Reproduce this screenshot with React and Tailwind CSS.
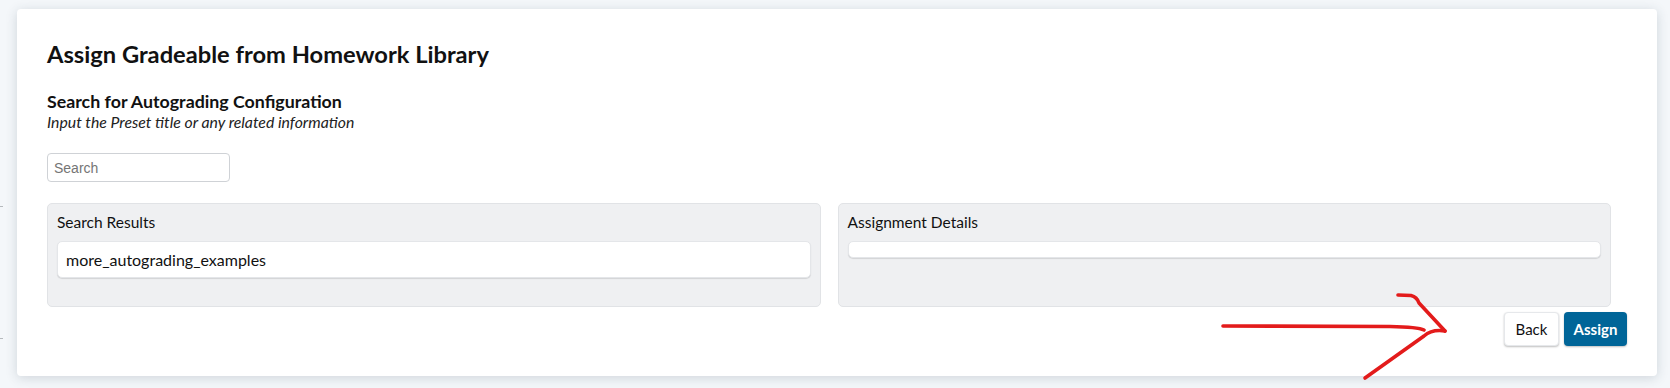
import React from "react";

export default function App() {
  const font = { fontFamily: "Lato, 'Noto Sans', sans-serif" };
  return (
    <div className="relative w-[1670px] h-[388px] overflow-hidden bg-[#f4f7fa]" style={font}>
      <div className="absolute left-0 top-[206px] w-[3px] h-px bg-[#b5b9bd]" />
      <div className="absolute left-0 top-[338px] w-[3px] h-px bg-[#b5b9bd]" />
      <div className="pt-[9px] pl-[17px]">
        <div className="w-[1640px] h-[367px] bg-white rounded-[4px] shadow-[0_2px_12px_rgba(40,60,80,0.18)] pt-[30px] px-[30px] flex flex-col">
          <h1 className="text-[23.7px] leading-[30px] font-bold text-[#111] m-0">
            Assign Gradeable from Homework Library
          </h1>
          <h2 className="mt-[21px] text-[17.8px] leading-[22px] font-bold text-[#111]">
            Search for Autograding Configuration
          </h2>
          <p className="text-[15.8px] leading-[20px] italic text-[#222]">
            Input the Preset title or any related information
          </p>
          <input
            placeholder="Search"
            className="mt-[21px] w-[183px] h-[29px] border border-[#cfd2d6] rounded-[4px] px-[6px] text-[14px] placeholder-[#757575] outline-none"
            style={{ fontFamily: "'Liberation Sans', Arial, sans-serif" }}
          />
          <div className="mt-[21px] mr-[16px] flex gap-[17px]">
            <div className="flex-1 h-[104px] bg-[#eff0f2] border border-[#e1e3e6] rounded-[5px] px-[9px] pt-[8px]">
              <div className="text-[15.5px] leading-[20px] text-[#111]">Search Results</div>
              <div className="mt-[9px] h-[37px] bg-white rounded-[5px] border border-[#e4e6e9] shadow-[0_1px_1px_rgba(0,0,0,0.12)] flex items-center px-[8px] text-[16px] text-[#111]">
                more_autograding_examples
              </div>
            </div>
            <div className="flex-1 h-[104px] bg-[#eff0f2] border border-[#e1e3e6] rounded-[5px] px-[9px] pt-[8px]">
              <div className="text-[15.5px] leading-[20px] text-[#111]">Assignment Details</div>
              <div className="mt-[9px] h-[17px] bg-white rounded-[5px] border border-[#e4e6e9] shadow-[0_1px_1px_rgba(0,0,0,0.12)]" />
            </div>
          </div>
          <div className="mt-[5px] flex justify-end gap-[5px]">
            <button className="w-[55px] h-[34px] bg-white rounded-[4px] border border-[#e6e8eb] shadow-[0_1px_2px_rgba(0,0,0,0.25)] text-[15px] text-[#111]">
              Back
            </button>
            <button className="w-[63px] h-[34px] bg-[#006598] rounded-[4px] shadow-[0_1px_2px_rgba(0,0,0,0.25)] text-[15px] font-bold text-white">
              Assign
            </button>
          </div>
        </div>
      </div>
      <svg
        className="absolute left-0 top-0 pointer-events-none"
        width="1670"
        height="388"
        viewBox="0 0 1670 388"
        fill="none"
      >
        <g stroke="#e31b1b" strokeWidth="3.6" strokeLinecap="round" strokeLinejoin="round">
          <path d="M1223 326 L1390 326.5 Q1418 327 1424 330" />
          <path d="M1398 295 L1411 295.5 Q1417 297 1419 303 L1445 331" />
          <path d="M1445 331 Q1432 329 1424 336 L1365 378" />
        </g>
      </svg>
    </div>
  );
}
